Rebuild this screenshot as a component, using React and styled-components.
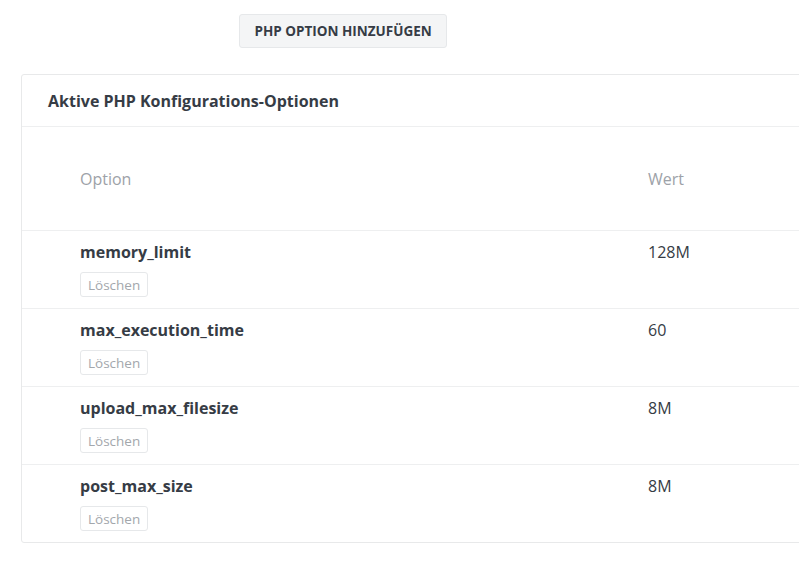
import React from 'react'
import styled, { createGlobalStyle } from 'styled-components'

const Global = createGlobalStyle`
  html, body {
    margin: 0;
    background: #fff;
    overflow: hidden;
  }
  body {
    font-family: "Open Sans", "Noto Sans", sans-serif;
    color: #363c45;
  }
`

const Page = styled.div`
  width: 799px;
  height: 563px;
  overflow: hidden;
  padding: 14px 0 0 21px;
  box-sizing: border-box;
`

const Toolbar = styled.div`
  display: flex;
  padding-left: 218px;
  margin-bottom: 26px;
`

const AddButton = styled.button`
  font-family: inherit;
  font-size: 13.5px;
  font-weight: 700;
  color: #363c45;
  background: #f4f5f6;
  border: 1px solid #e6e8ea;
  border-radius: 3px;
  height: 34px;
  padding: 0 14.5px;
`

const Card = styled.div`
  width: 840px;
  border: 1px solid #e8e9ea;
  border-radius: 3px;
  background: #fff;
`

const CardHeader = styled.div`
  height: 51px;
  display: flex;
  align-items: center;
  padding-left: 26px;
  font-size: 16px;
  font-weight: 700;
  border-bottom: 1px solid #eeeff0;
`

const Row = styled.div`
  display: grid;
  grid-template-columns: 568px 1fr;
  padding-left: 58px;
  border-top: ${p => (p.first ? 'none' : '1px solid #eeeff0')};
  height: ${p => p.h}px;
  box-sizing: border-box;
`

const HeadCell = styled.div`
  display: flex;
  align-items: center;
  font-size: 16px;
  color: #9da2a8;
`

const Cell = styled.div`
  padding-top: 10px;
  display: flex;
  flex-direction: column;
  align-items: flex-start;
`

const Name = styled.div`
  font-size: 16px;
  font-weight: 700;
  line-height: 22px;
`

const Value = styled.div`
  font-size: 16px;
  line-height: 22px;
`

const DeleteButton = styled.button`
  margin-top: 9px;
  font-family: inherit;
  font-size: 13.5px;
  color: #a3a7ac;
  background: #fff;
  border: 1px solid #e6e8ea;
  border-radius: 3px;
  height: 25px;
  padding: 0 7px;
`

const options = [
  { name: 'memory_limit', value: '128M' },
  { name: 'max_execution_time', value: '60' },
  { name: 'upload_max_filesize', value: '8M' },
  { name: 'post_max_size', value: '8M' },
]

export default function App() {
  return (
    <Page>
      <Global />
      <Toolbar>
        <AddButton>PHP OPTION HINZUFÜGEN</AddButton>
      </Toolbar>
      <Card>
        <CardHeader>Aktive PHP Konfigurations-Optionen</CardHeader>
        <Row first h={103}>
          <HeadCell>Option</HeadCell>
          <HeadCell>Wert</HeadCell>
        </Row>
        {options.map(o => (
          <Row key={o.name} h={78}>
            <Cell>
              <Name>{o.name}</Name>
              <DeleteButton>Löschen</DeleteButton>
            </Cell>
            <Cell>
              <Value>{o.value}</Value>
            </Cell>
          </Row>
        ))}
      </Card>
    </Page>
  )
}
